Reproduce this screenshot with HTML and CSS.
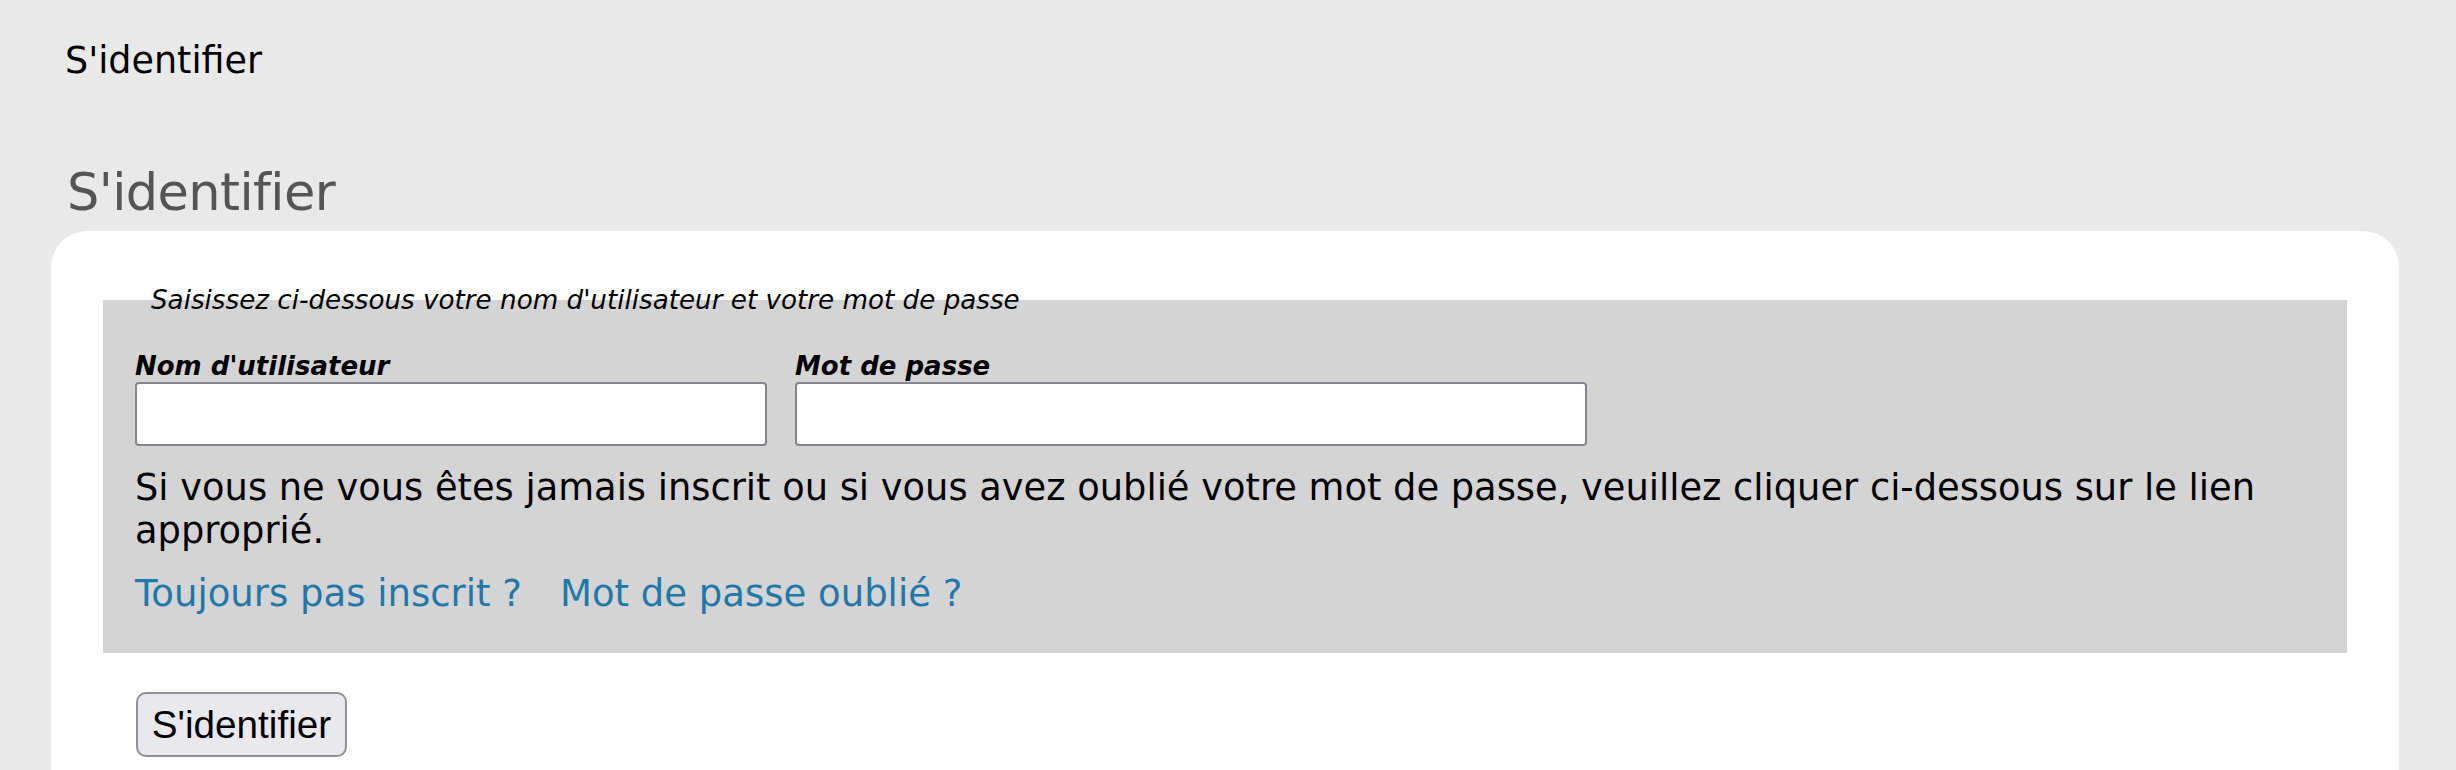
FILE: index.html
```html
<!doctype html>
<html lang="fr">

<head>
  <meta charset="UTF-8" />
  <meta name="viewport" content="width=device-width, initial-scale=1.0" />
  <title>S'identifier</title>
  <link rel="stylesheet" href="styles.css">
</head>

<body>
  <div class="page">
    <div class="topbar">S'identifier</div>
    <h1>S'identifier</h1>
    <div class="card">
      <form action="/login" method="POST">
        <fieldset>
          <legend>Saisissez ci-dessous votre nom d'utilisateur et votre mot de passe</legend>
          <div class="fields">
            <div class="form-group">
              <label for="username">Nom d'utilisateur</label>
              <input type="text" id="username" name="username" class="input-user" />
            </div>
            <div class="form-group">
              <label for="password">Mot de passe</label>
              <input type="password" id="password" name="password" class="input-pass" />
            </div>
          </div>
          <p class="help">
            Si vous ne vous êtes jamais inscrit ou si vous avez oublié votre mot de passe, veuillez cliquer ci-dessous sur le lien approprié.
          </p>
          <div class="links">
            <a href="#">Toujours pas inscrit ?</a>
            <a href="#">Mot de passe oublié ?</a>
          </div>
        </fieldset>
        <input type="submit" value="S'identifier" />
      </form>
    </div>
  </div>
</body>

</html>
```

FILE: styles.css
```css
body {
  font-family: 'DejaVu Sans', Verdana, sans-serif;
  font-size: 36.5px;
  line-height: 42px;
  background-color: #e9e9e9;
  color: #000;
  margin: 0;
}

.page {
  padding: 40px 57px 0 51px;
}

.topbar {
  padding-left: 14px;
}

h1 {
  margin: 82px 0 9px 16px;
  font-size: 51px;
  line-height: 58px;
  letter-spacing: -0.6px;
  font-weight: normal;
  color: #555;
}

.card {
  background-color: #ffffff;
  border-radius: 36px 36px 0 0;
  padding: 54px 52px 40px;
}

fieldset {
  margin: 0;
  border: 0;
  padding: 36px 32px 38px;
  background-color: #d4d4d4;
  min-width: 0;
}

legend {
  padding: 0 2px;
  margin-left: 14px;
  font-size: 26.2px;
  line-height: 30px;
  font-style: italic;
}

.fields {
  display: flex;
  gap: 28px;
}

.form-group {
  display: flex;
  flex-direction: column;
}

label {
  font-size: 26px;
  line-height: 30px;
  font-weight: bold;
  font-style: italic;
}

input[type='text'],
input[type='password'] {
  margin: 1px 0 0;
  height: 64px;
  box-sizing: border-box;
  border: 2px solid #85858d;
  border-radius: 4px;
  background-color: #fff;
  padding: 0 8px;
  font-size: 26px;
}

.input-user {
  width: 632px;
}

.input-pass {
  width: 792px;
}

.help {
  margin: 20px 0 0;
  font-size: 36.8px;
  line-height: 43px;
}

.links {
  display: flex;
  gap: 38px;
  margin-top: 20px;
  font-size: 37px;
  line-height: 43px;
}

.links a {
  color: #1f78a9;
  text-decoration: none;
}

input[type='submit'] {
  margin: 39px 0 0 33px;
  width: 211px;
  height: 65px;
  box-sizing: border-box;
  padding: 0;
  font-family: 'Liberation Sans', Arial, sans-serif;
  font-size: 38.7px;
  color: #000;
  background-color: #e9e9ed;
  border: 2px solid #8f8f9d;
  border-radius: 10px;
  cursor: pointer;
}
```
